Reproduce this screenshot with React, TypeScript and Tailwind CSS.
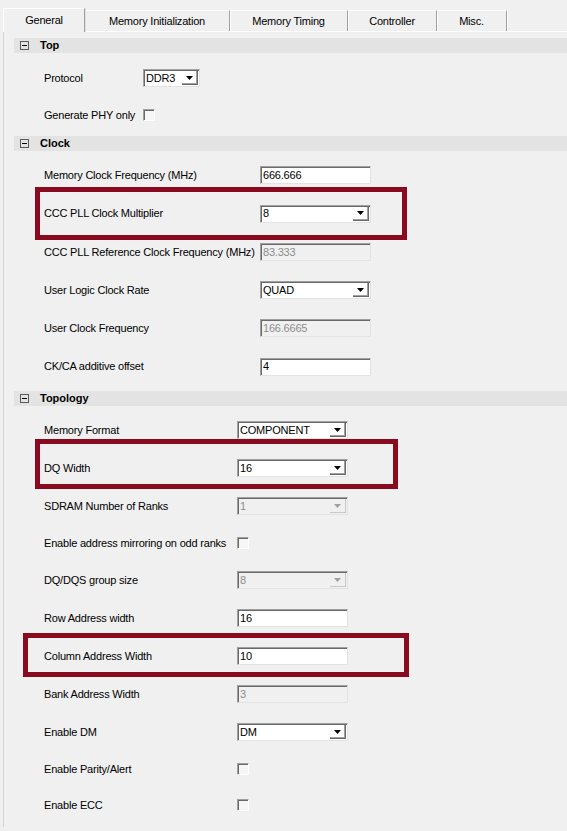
import React from "react";

type Kind = "input" | "select" | "check";

type Row = {
  label: string;
  kind: Kind;
  value?: string;
  disabled?: boolean;
  h: string;
  mark?: string;
};

type Section = {
  title: string;
  labelW: string;
  ctrlW: string;
  pad: string;
  rows: Row[];
};

const TABS = [
  { label: "General", w: "w-[82px]", active: true },
  { label: "Memory Initialization", w: "w-[145px]" },
  { label: "Memory Timing", w: "w-[118px]" },
  { label: "Controller", w: "w-[89px]" },
  { label: "Misc.", w: "w-[70px]" },
];

const SECTIONS: Section[] = [
  {
    title: "Top",
    labelW: "w-[99px]",
    ctrlW: "w-[57px]",
    pad: "pt-[6px] pb-[3px]",
    rows: [
      { label: "Protocol", kind: "select", value: "DDR3", h: "h-[38px]" },
      { label: "Generate PHY only", kind: "check", h: "h-[36px]" },
    ],
  },
  {
    title: "Clock",
    labelW: "w-[216px]",
    ctrlW: "w-[111px]",
    pad: "pt-[5px] pb-[5px]",
    rows: [
      { label: "Memory Clock Frequency (MHz)", kind: "input", value: "666.666", h: "h-[38px]" },
      {
        label: "CCC PLL Clock Multiplier",
        kind: "select",
        value: "8",
        h: "h-[39px]",
        mark: "left-[31px] top-[-7px] h-[53px] w-[372px]",
      },
      {
        label: "CCC PLL Reference Clock Frequency (MHz)",
        kind: "input",
        value: "83.333",
        disabled: true,
        h: "h-[38px]",
      },
      { label: "User Logic Clock Rate", kind: "select", value: "QUAD", h: "h-[38px]" },
      { label: "User Clock Frequency", kind: "input", value: "166.6665", disabled: true, h: "h-[38px]" },
      { label: "CK/CA additive offset", kind: "input", value: "4", h: "h-[39px]" },
    ],
  },
  {
    title: "Topology",
    labelW: "w-[193px]",
    ctrlW: "w-[111px]",
    pad: "pt-[5px]",
    rows: [
      { label: "Memory Format", kind: "select", value: "COMPONENT", h: "h-[38px]" },
      {
        label: "DQ Width",
        kind: "select",
        value: "16",
        h: "h-[38px]",
        mark: "left-[31px] top-[-10px] h-[50px] w-[363px]",
      },
      { label: "SDRAM Number of Ranks", kind: "select", value: "1", disabled: true, h: "h-[38px]" },
      { label: "Enable address mirroring on odd ranks", kind: "check", h: "h-[36px]" },
      { label: "DQ/DQS group size", kind: "select", value: "8", disabled: true, h: "h-[38px]" },
      { label: "Row Address width", kind: "input", value: "16", h: "h-[38px]" },
      {
        label: "Column Address Width",
        kind: "input",
        value: "10",
        h: "h-[38px]",
        mark: "left-[19px] top-[-4px] h-[44px] w-[386px]",
      },
      { label: "Bank Address Width", kind: "input", value: "3", disabled: true, h: "h-[38px]" },
      { label: "Enable DM", kind: "select", value: "DM", h: "h-[38px]" },
      { label: "Enable Parity/Alert", kind: "check", h: "h-[36px]" },
      { label: "Enable ECC", kind: "check", h: "h-[36px]" },
    ],
  },
];

function Arrow({ disabled }: { disabled?: boolean }) {
  return (
    <span
      className={`mr-px flex h-[14px] w-[16px] shrink-0 items-center justify-center border-r border-b ${
        disabled
          ? "border-[#c8c8c8] bg-[#f0f0f0]"
          : "border-[#696969] bg-white shadow-[inset_-1px_-1px_0_#a0a0a0]"
      }`}
    >
      <svg width="7" height="4" viewBox="0 0 7 4">
        <polygon points="0,0 7,0 3.5,4" fill={disabled ? "#a0a0a0" : "#000"} />
      </svg>
    </span>
  );
}

function Field({ row, width }: { row: Row; width: string }) {
  return (
    <div
      className={`flex h-[18px] items-center border border-t-[#a0a0a0] border-l-[#a0a0a0] border-r-[#e3e3e3] border-b-[#e3e3e3] shadow-[inset_1px_1px_0_#696969] ${width} ${
        row.disabled ? "bg-[#f0f0f0] text-[#8d8d8d]" : "bg-white text-black"
      }`}
    >
      <span className="flex-1 truncate pl-[2px] leading-none">{row.value}</span>
      {row.kind === "select" && <Arrow disabled={row.disabled} />}
    </div>
  );
}

function Check() {
  return (
    <span className="block h-[12px] w-[12px] border border-t-[#a0a0a0] border-l-[#a0a0a0] border-r-white border-b-white bg-[#f6f6f6] shadow-[inset_1px_1px_0_#696969]" />
  );
}

function SectionHeader({ title }: { title: string }) {
  return (
    <div className="ml-[10px] flex h-[15px] items-center bg-[#e3e3e3] pl-[6px]">
      <span className="flex h-[9px] w-[9px] items-center justify-center border border-[#5a5a5a]">
        <span className="h-px w-[5px] bg-black" />
      </span>
      <span className="ml-[11px] font-bold tracking-normal text-black">{title}</span>
    </div>
  );
}

export default function App() {
  return (
    <div className="h-[831px] w-[567px] overflow-hidden bg-[#f0f0f0] font-['Liberation_Sans',Arial,sans-serif] text-[11px] tracking-[-0.2px] text-black">
      <div className="mt-[8px] flex h-[23px] items-start pl-[3px]">
        {TABS.map((t) =>
          t.active ? (
            <div
              key={t.label}
              className={`relative z-10 flex h-[24px] items-center justify-center border-t border-l border-r border-t-white border-l-white border-r-[#a0a0a0] bg-[#f0f0f0] shadow-[1px_0_0_#e0e0e0] ${t.w}`}
            >
              {t.label}
            </div>
          ) : (
            <div
              key={t.label}
              className={`mt-[2px] flex h-[21px] items-center justify-center border-t border-r border-t-white border-r-[#a0a0a0] shadow-[1px_0_0_#ffffff] ${t.w}`}
            >
              {t.label}
            </div>
          )
        )}
      </div>

      <div className="ml-[3px] h-[796px] border-t border-l border-t-white border-l-[#d4d4d4] pt-[6px]">
        {SECTIONS.map((s) => (
          <div key={s.title}>
            <SectionHeader title={s.title} />
            <div className={s.pad}>
              {s.rows.map((r) => (
                <div key={r.label} className={`relative flex items-center pl-[40px] ${r.h}`}>
                  <span className={`shrink-0 whitespace-nowrap ${s.labelW}`}>{r.label}</span>
                  {r.kind === "check" ? <Check /> : <Field row={r} width={s.ctrlW} />}
                  {r.mark && (
                    <span className={`pointer-events-none absolute border-[5px] border-[#8a0a20] ${r.mark}`} />
                  )}
                </div>
              ))}
            </div>
          </div>
        ))}
      </div>
    </div>
  );
}
